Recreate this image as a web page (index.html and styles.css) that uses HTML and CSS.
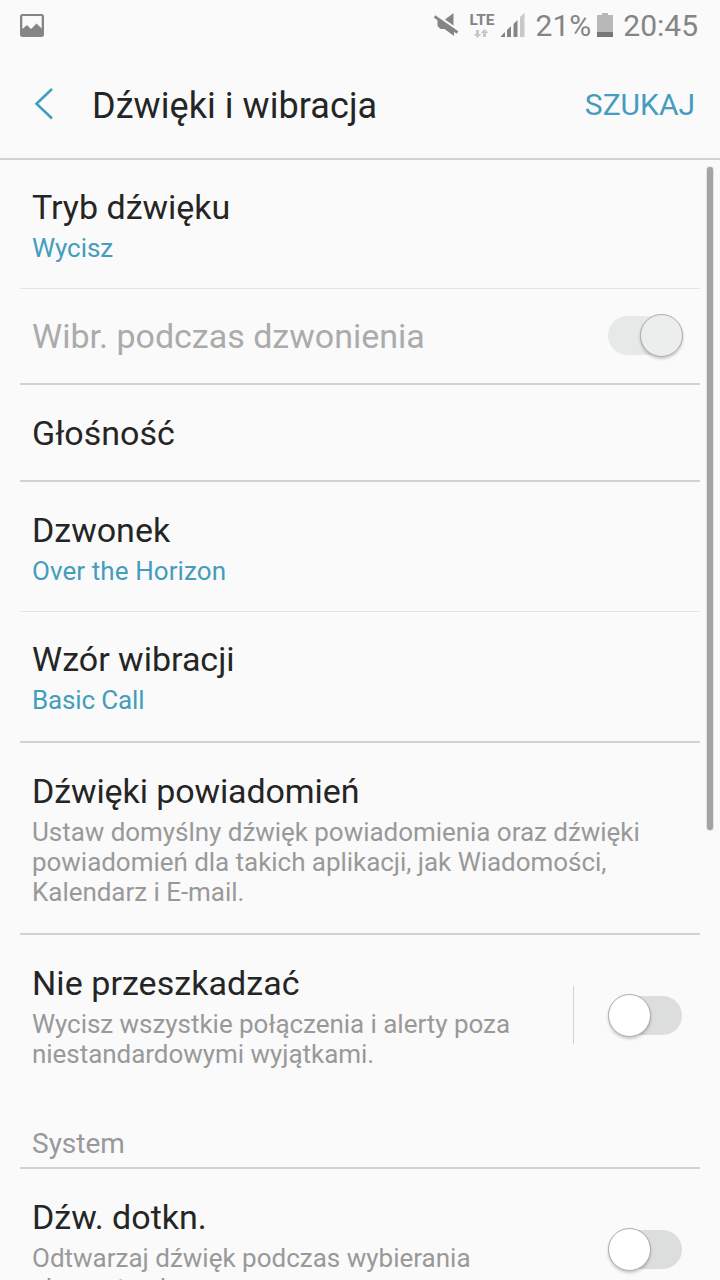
FILE: index.html
```html
<!DOCTYPE html>
<html lang="pl">
<head>
<meta charset="utf-8">
<title>Dźwięki i wibracja</title>
<link rel="stylesheet" href="styles.css">
</head>
<body>
<div class="screen">
  <div class="status">
    <svg class="picture" width="24" height="23" viewBox="0 0 24 23"><path fill="#858585" fill-rule="evenodd" d="M2.500 0h19A2.500 2.500 0 0 1 24 2.500v18a2.500 2.500 0 0 1-2.500 2.500h-19A2.500 2.500 0 0 1 0 20.500v-18A2.500 2.500 0 0 1 2.500 0ZM2.300 2v13L7 11l4 4 5.500-5.500 5.200 5V2Z"/></svg>
    <svg class="signals" width="96" height="30" viewBox="0 0 96 30">
      <path fill="#858585" d="M19.500 3v12.500L11 9.500ZM3.500 9.500 20 20.500V26L10.500 19H6.500L3.500 16Z"/>
      <path stroke="#858585" stroke-width="2.800" d="M.5 6.500 23.500 22.500"/>
      <text class="lte" x="35.500" y="15" textLength="25" lengthAdjust="spacingAndGlyphs">LTE</text>
      <path fill="#c8c8c8" d="M42 20h3v4h2.500L43.500 28 39.500 24H42ZM49 27v-4h-2.300L50.500 19l4 4H52v4Z"/>
      <path fill="#858585" d="M67 27v-1l4-4v5ZM73 27v-7l4-4v11ZM79.500 27V14l4-4v17Z"/>
      <path fill="#c8c8c8" d="M86 27V7l4.500-4v24Z"/>
    </svg>
    <span class="percent">21%</span>
    <svg class="battery" width="16" height="24" viewBox="0 0 16 24"><path fill="#b8b8b8" d="M5 0h6v2h5v17H0V2h5Z"/><path fill="#777" d="M0 19h16v5H0Z"/></svg>
    <span class="clock">20:45</span>
  </div>
  <header class="header">
    <svg class="back" width="20" height="34" viewBox="0 0 20 34"><path d="M19 2 3.500 16.800 19 31.500" fill="none" stroke="#459dbd" stroke-width="2.600"/></svg>
    <h1 class="heading">Dźwięki i wibracja</h1>
    <span class="search">SZUKAJ</span>
  </header>
  <main class="list">
    <section class="row mode thin"><div><div class="title">Tryb dźwięku</div><div class="sub value">Wycisz</div></div></section>
    <section class="row vibrate"><div class="title disabled">Wibr. podczas dzwonienia</div><span class="switch on"></span></section>
    <section class="row volume"><div class="title">Głośność</div></section>
    <section class="row ringtone thin"><div><div class="title">Dzwonek</div><div class="sub value">Over the Horizon</div></div></section>
    <section class="row pattern"><div><div class="title">Wzór wibracji</div><div class="sub value">Basic Call</div></div></section>
    <section class="row notify"><div><div class="title">Dźwięki powiadomień</div><div class="sub">Ustaw domyślny dźwięk powiadomienia oraz dźwięki<br>powiadomień dla takich aplikacji, jak Wiadomości,<br>Kalendarz i E-mail.</div></div></section>
    <section class="row dnd"><div><div class="title">Nie przeszkadzać</div><div class="sub">Wycisz wszystkie połączenia i alerty poza<br>niestandardowymi wyjątkami.</div></div><span class="split"></span><span class="switch"></span></section>
    <h2 class="group">System</h2>
    <section class="row touch"><div><div class="title">Dźw. dotkn.</div><div class="sub">Odtwarzaj dźwięk podczas wybierania<br>elementu ekranu.</div></div><span class="switch"></span></section>
  </main>
  <span class="scrollbar"></span>
</div>
</body>
</html>
```
FILE: styles.css
```css
*, *::before, *::after { box-sizing: border-box; }
body { margin: 0; background: #fafafa; font-family: Roboto, sans-serif; color: #252525; }
.screen { position: relative; width: 720px; height: 1280px; overflow: hidden; }
.status { display: flex; height: 50px; padding: 0 22px 0 20px; color: #858585; }
.picture { margin-top: 14px; }
.signals { margin: 10px 0 0 auto; }
.lte { font-size: 15px; font-weight: 700; fill: #858585; }
.percent, .clock { font-size: 30px; line-height: 52px; white-space: nowrap; }
.percent { margin-left: 6px; }
.battery { margin: 13px 10px 0 6px; }
.header { display: flex; align-items: center; height: 110px; padding: 3px 25px 0 33px; border-bottom: 2px solid #d2d2d2; }
.back { margin-bottom: 4px; }
.heading { margin: 1px auto 0 39px; font-size: 36px; font-weight: 400; line-height: 42px; letter-spacing: .06px; }
.search { margin-bottom: 2px; font-size: 30px; line-height: 36px; color: #459dbd; }
.list { margin: 0 20px; }
.row { display: flex; justify-content: space-between; padding: 27px 17px 0 12px; border-bottom: 2px solid #d2d2d2; }
.thin { border-bottom: 1px solid #e4e4e4; }
.title { font-size: 34px; line-height: 40px; white-space: nowrap; }
.disabled { color: #ababab; }
.sub { margin-top: 6px; font-size: 26px; line-height: 30px; color: #999; letter-spacing: -.04px; white-space: nowrap; }
.value { color: #459dbd; }
.mode { height: 129px; }
.vibrate { height: 96px; }
.volume { height: 97px; padding-top: 28px; }
.ringtone { height: 130px; padding-top: 28px; }
.ringtone .sub { letter-spacing: .08px; }
.pattern { height: 131px; }
.pattern .sub { letter-spacing: -.15px; }
.notify { height: 192px; padding-top: 28px; }
.notify .title { letter-spacing: -.1px; }
.dnd { height: 174px; padding-top: 28px; border: 0; }
.dnd .title { letter-spacing: .06px; }
.touch { height: 190px; padding-top: 28px; border: 0; }
.touch .sub { letter-spacing: 0; }
.group { height: 60px; margin: 0; padding: 18px 12px 0; border-bottom: 2px solid #d2d2d2; font-size: 28px; line-height: 34px; font-weight: 400; color: #999; }
.switch { position: relative; display: flex; flex: none; align-items: center; width: 75px; height: 43px; margin-top: -2px; }
.switch::before { content: ""; flex: 1; height: 39px; margin: 0 1px; border-radius: 20px; background: #dcdedd; }
.switch::after { content: ""; position: absolute; left: 0; top: 0; width: 43px; height: 43px; border: 1px solid #aaa; border-radius: 50%; background: #fff; box-shadow: 0 2px 3px #0003; }
.on::before { margin-left: 0; background: #e7e8e8; }
.on::after { left: 32px; background: #eceeed; }
.dnd .switch, .touch .switch { margin-top: 31px; }
.split { width: 1px; height: 58px; margin: 23px 34px 0 auto; background: #d2d2d2; }
.scrollbar { position: absolute; left: 707px; top: 167px; width: 6px; height: 663px; border-radius: 3px; background: #a2a3a5; box-shadow: 0 0 0 1px #e4e4e4; }
```
